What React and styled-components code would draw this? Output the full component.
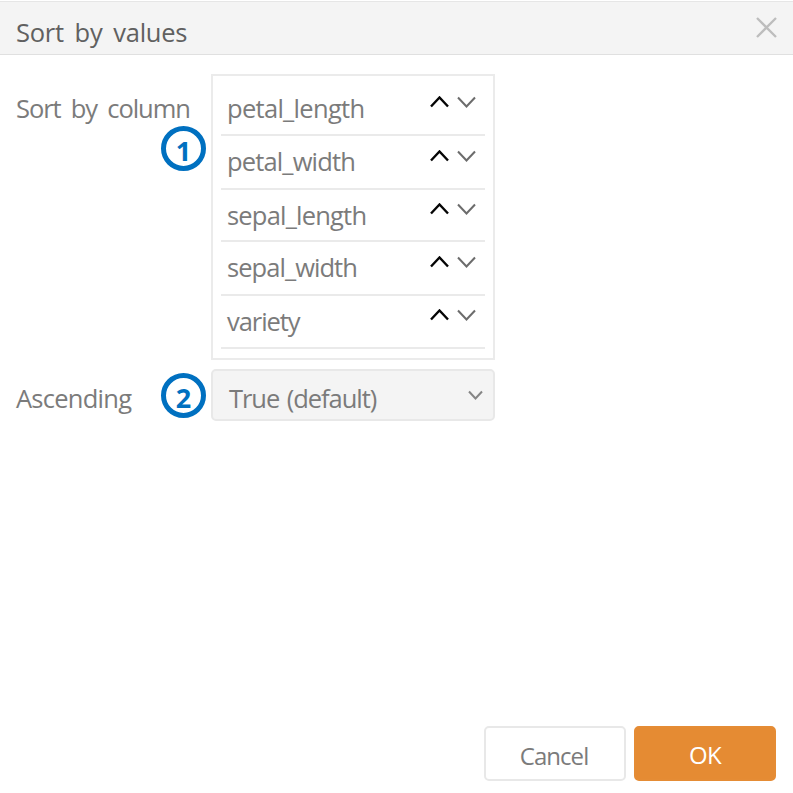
import React from "react";
import styled, { createGlobalStyle } from "styled-components";

const GlobalStyle = createGlobalStyle`
  * { box-sizing: border-box; }
  body { margin: 0; background: #fff; overflow: hidden; }
`;

const Dialog = styled.main`
  width: 793px;
  height: 793px;
  padding-top: 1px;
  display: flex;
  flex-direction: column;
  background: #fff;
  color: #7b7b7b;
  font-family: "Open Sans", "Noto Sans", sans-serif;
  font-size: 25.5px;
`;

const Header = styled.header`
  height: 54px;
  flex: none;
  display: flex;
  justify-content: space-between;
  padding: 0 16px;
  background: #f4f4f4;
  border-top: 1px solid #e6e6e6;
  border-bottom: 1px solid #e0e0e0;
  color: #606060;
`;

const Text = styled.span`
  display: block;
  line-height: 36px;
  white-space: pre;
  font-weight: ${(p) => p.$weight || 400};
  letter-spacing: ${(p) => p.$spacing || 0}px;
  word-spacing: ${(p) => p.$words || 0}px;
`;

const Title = styled.h1`
  margin: 12px 0 0;
  font-size: inherit;
`;

const IconButton = styled.button`
  display: block;
  padding: 0;
  border: 0;
  background: none;
  line-height: 0;
`;

const CloseButton = styled(IconButton)`
  align-self: flex-start;
  margin: 15px 0 0;
`;

const Body = styled.section`
  flex: 1;
  display: flex;
  flex-direction: column;
  gap: 9px;
  padding: 19px 0 0 16px;
`;

const Field = styled.div`
  display: grid;
  grid-template-columns: 195px 284px;
  height: ${(p) => p.$height}px;
`;

const LabelCell = styled.div`
  display: flex;
  flex-direction: ${(p) => (p.$stacked ? "column" : "row")};
  align-items: flex-start;
  justify-content: ${(p) => (p.$stacked ? "flex-start" : "space-between")};
  padding: ${(p) => (p.$stacked ? 16 : 4)}px 5px 0 0;
`;

const Label = styled(Text)`
  margin-top: ${(p) => p.$top || 0}px;
`;

const Badge = styled.svg`
  display: block;
  flex: none;
  align-self: ${(p) => (p.$below ? "flex-end" : "flex-start")};
  color: #0070c0;
  text {
    font: 700 27px "Noto Sans", "Open Sans", sans-serif;
    fill: currentColor;
    text-anchor: middle;
  }
`;

const ColumnList = styled.ul`
  margin: 0;
  padding: 0 8px;
  list-style: none;
  border: 2px solid #ebebeb;
`;

const ColumnRow = styled.li`
  height: ${(p) => p.$height}px;
  display: flex;
  justify-content: space-between;
  align-items: flex-end;
  padding: 0 9px 0 6px;
  border-bottom: 2px solid #eaeaea;
`;

const RowText = styled(Text)`
  margin-bottom: ${(p) => p.$bottom}px;
`;

const Arrows = styled.div`
  display: flex;
  gap: 8px;
  margin-bottom: ${(p) => p.$bottom}px;
`;

const Select = styled.button`
  display: flex;
  justify-content: space-between;
  align-items: flex-start;
  padding: 9px 10px 0 16px;
  border: 2px solid #e8e8e8;
  border-radius: 5px;
  background: #f4f4f4;
  color: inherit;
  font: inherit;
  svg { margin-top: 10px; }
`;

const Footer = styled.footer`
  display: flex;
  justify-content: flex-end;
  gap: 8px;
  height: 67px;
  padding: 0 17px 12px 0;
`;

const Button = styled.button`
  width: 142px;
  height: 55px;
  display: flex;
  justify-content: center;
  padding: ${(p) => (p.$primary ? "9px 0 0" : "10px 2px 0 0")};
  border: 2px solid ${(p) => (p.$primary ? "#e58c35" : "#e8e8e8")};
  border-radius: 5px;
  background: ${(p) => (p.$primary ? "#e58b33" : "#fff")};
  color: ${(p) => (p.$primary ? "#fff" : "#7b7b7b")};
  font: inherit;
  font-size: 24px;
`;

function Chevron({ up, width = 19, height = 12, color = "#6c6c6c", stroke = 2 }) {
  const d = up
    ? `M1 ${height - 1.5}L${width / 2} 1.5L${width - 1} ${height - 1.5}`
    : `M1 1.5L${width / 2} ${height - 1.5}L${width - 1} 1.5`;
  return (
    <svg width={width} height={height} fill="none">
      <path d={d} stroke={color} strokeWidth={stroke} />
    </svg>
  );
}

function Marker({ value, below }) {
  return (
    <Badge width="45" height="45" $below={below}>
      <circle cx="22.5" cy="22.5" r="20" fill="#fff" stroke="currentColor" strokeWidth="5" />
      <text x="22.5" y="34.5">{value}</text>
    </Badge>
  );
}

const columns = [
  { name: "petal_length", height: 60, bottom: 8, arrows: 26, spacing: -0.7 },
  { name: "petal_width", height: 54, bottom: 9, arrows: 26, spacing: -0.85 },
  { name: "sepal_length", height: 52, bottom: 7, arrows: 25, spacing: -0.8 },
  { name: "sepal_width", height: 54, bottom: 9, arrows: 26, spacing: -0.95 },
  { name: "variety", height: 53, bottom: 8, arrows: 26, spacing: -1.05 },
];

export default function App() {
  return (
    <>
      <GlobalStyle />
      <Dialog>
        <Header>
          <Title><Text $spacing={-0.25} $words={4.4}>Sort by values</Text></Title>
          <CloseButton aria-label="Close">
            <svg width="21" height="21" fill="none">
              <path d="M1 1L20 20M20 1L1 20" stroke="#bdbdbd" strokeWidth="2.3" />
            </svg>
          </CloseButton>
        </Header>
        <Body>
          <Field $height={286}>
            <LabelCell $stacked>
              <Label $spacing={-1.05} $words={4.6}>Sort by column</Label>
              <Marker value="1" below />
            </LabelCell>
            <ColumnList>
              {columns.map((c) => (
                <ColumnRow key={c.name} $height={c.height}>
                  <RowText $bottom={c.bottom} $spacing={c.spacing}>{c.name}</RowText>
                  <Arrows $bottom={c.arrows}>
                    <IconButton aria-label="Move up"><Chevron up color="#050505" stroke={2.4} /></IconButton>
                    <IconButton aria-label="Move down"><Chevron /></IconButton>
                  </Arrows>
                </ColumnRow>
              ))}
            </ColumnList>
          </Field>
          <Field $height={52}>
            <LabelCell>
              <Label $top={7} $spacing={-0.75}>Ascending</Label>
              <Marker value="2" />
            </LabelCell>
            <Select>
              <Text $spacing={-1.05} $words={2}>True (default)</Text>
              <Chevron width={15} height={10} color="#858585" stroke={2} />
            </Select>
          </Field>
        </Body>
        <Footer>
          <Button><Text $spacing={-0.95}>Cancel</Text></Button>
          <Button $primary><Text $weight={500} $spacing={-0.8}>OK</Text></Button>
        </Footer>
      </Dialog>
    </>
  );
}
